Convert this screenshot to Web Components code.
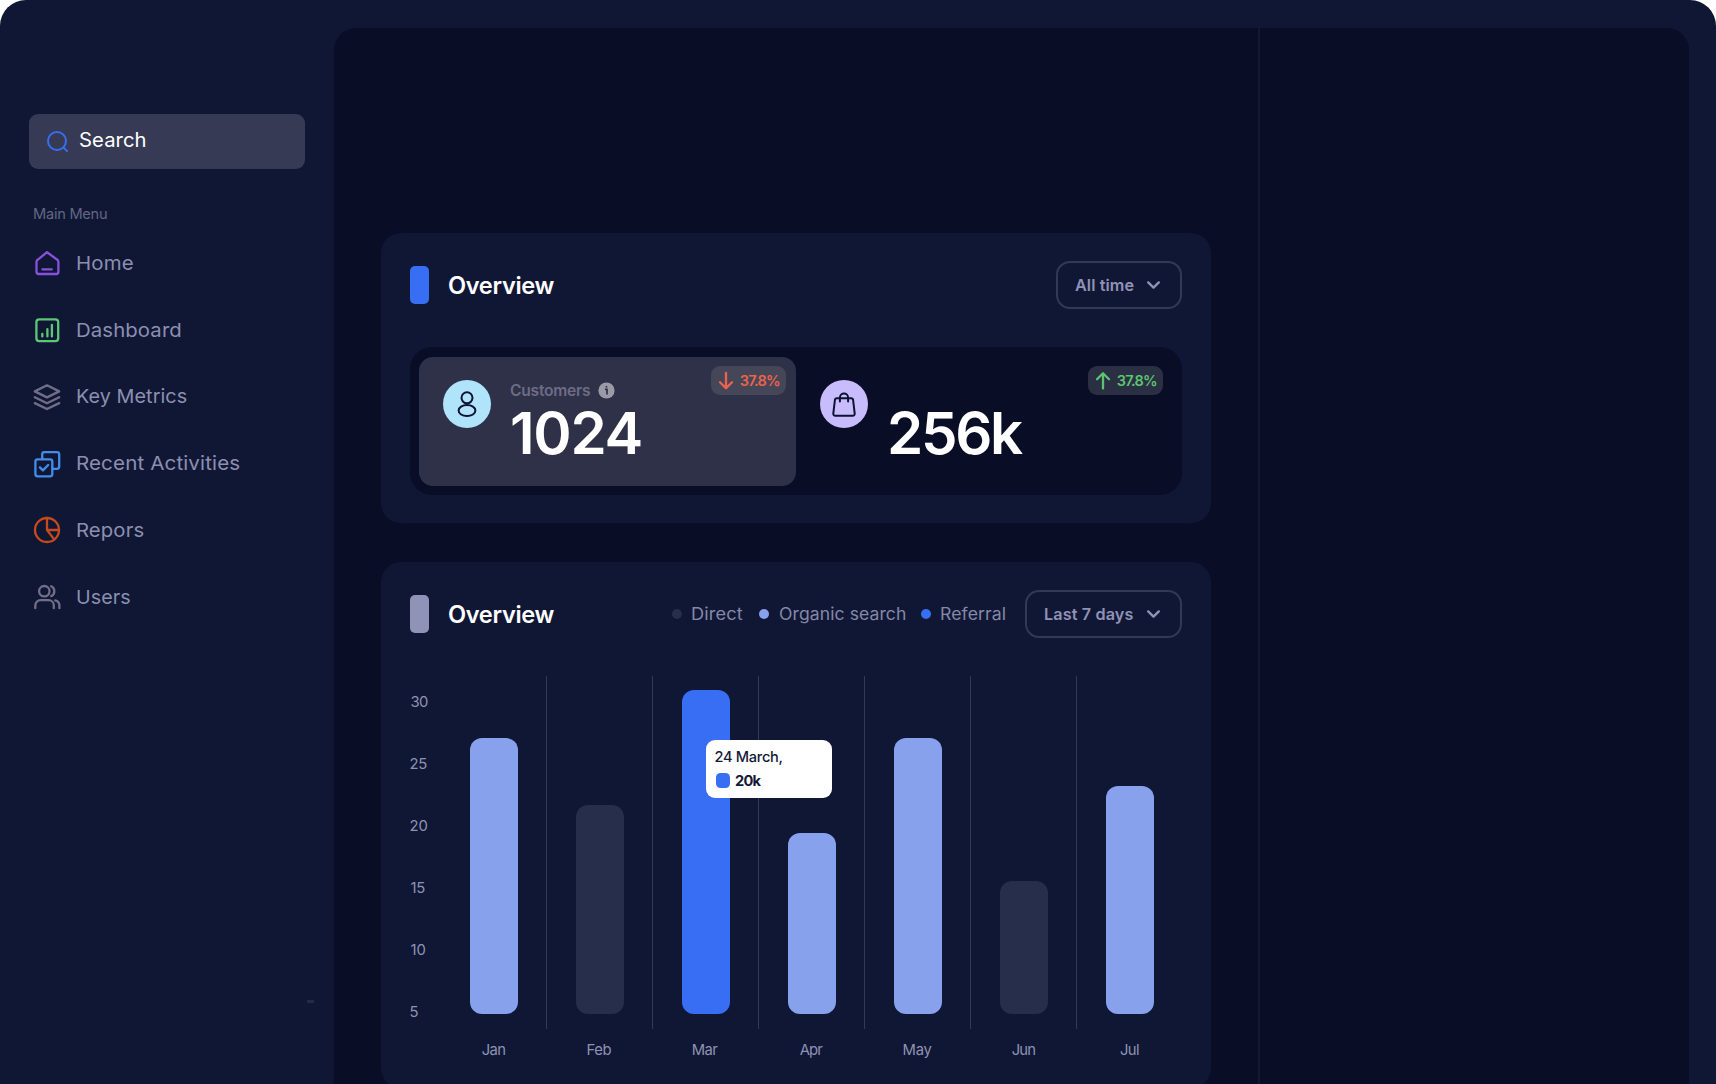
<!DOCTYPE html>
<html lang="en">
<head>
<meta charset="utf-8">
<title>Overview</title>
<style>
html,body{margin:0;height:100%;background:#fff;overflow:hidden}
body{font-family:Inter,"Liberation Sans",sans-serif}
</style>
</head>
<body>
<dash-app></dash-app>
<script>
const define = (name, html, setup) => customElements.define(name, class extends HTMLElement {
  connectedCallback() {
    if (this.shadowRoot) return;
    const root = this.attachShadow({ mode: 'open' });
    root.innerHTML = typeof html === 'function' ? html(this) : html;
    if (setup) setup(this, root);
  }
});

/* Text whose ink spans a set width: w = ink width in pixels, wide = draw the letters extended */
const ctx = document.createElement('canvas').getContext('2d');
define('fit-text', '<style>:host{display:block;white-space:pre;line-height:1.3;flex:none;transform-origin:0 50%}</style><slot></slot>', el => {
  const cs = getComputedStyle(el), t = el.textContent, w = parseFloat(el.getAttribute('w'));
  ctx.font = `${cs.fontWeight} ${cs.fontSize} ${cs.fontFamily}`;
  const m = ctx.measureText(t);
  const ink = m.actualBoundingBoxLeft + m.actualBoundingBoxRight;
  const scale = el.hasAttribute('wide') ? 1 + (w / ink - 1) * 0.85 : 1;
  el.style.width = w + 'px';
  if (scale !== 1) el.style.transform = `scaleX(${scale.toFixed(4)})`;
  el.style.letterSpacing = ((w / scale - ink) / Math.max(1, t.length - 1)).toFixed(3) + 'px';
  el.style.textIndent = m.actualBoundingBoxLeft.toFixed(2) + 'px';
});

const ICONS = {
  search: '<circle cx="11" cy="11" r="9"/><path d="M17.6 17.6L21 21"/>',
  home: '<path d="M14 3.2L24.3 10.8A2.6 2.6 0 0 1 25.4 13V22.8A2.2 2.2 0 0 1 23.2 25H5.7A2.2 2.2 0 0 1 3.5 22.8V13A2.6 2.6 0 0 1 4.6 10.8Z"/><path d="M9.4 20.3H18.8"/>',
  dashboard: '<rect x="3.4" y="3.3" width="21.8" height="21.8" rx="2.8"/><path d="M9.3 17.8V20.4M14.4 13.2V20.4M18.9 9V20.4"/>',
  layers: '<path d="M14 2.3L26.2 8.4L14 14.4L1.8 8.4ZM1.8 14.3L14 20.2L26.2 14.3M1.8 20.1L14 26L26.2 20.1"/>',
  recent: '<path d="M9.2 9V4.4A2.2 2.2 0 0 1 11.4 2.2H24A2.2 2.2 0 0 1 26.2 4.4V16.6A2.2 2.2 0 0 1 24 18.8H19.6"/><rect x="2.4" y="9.4" width="16.9" height="16.9" rx="2.2"/><path d="M6.9 17.4L9.9 20.4L15.2 15"/>',
  pie: '<circle cx="14" cy="14" r="12"/><path d="M14 2V14L21.2 23.4M14 14H26"/>',
  users: '<circle cx="11.3" cy="8.2" r="5.2"/><path d="M2.3 25.2V22.4A5.2 5.2 0 0 1 7.5 17.2H15.6A5.2 5.2 0 0 1 20.8 22.4V25.2M18.2 3.3A5.4 5.4 0 0 1 18.2 13.1M22.2 17.4A5.4 5.4 0 0 1 26.4 22.7V25.2"/>',
  chevron: '<path d="M1.2 1.4L6.5 6.6L11.8 1.4"/>',
  down: '<path d="M7 1V16M1 10.2L7 16.2L13 10.2"/>',
  up: '<path d="M7 16.6V1.4M1 7.2L7 1.2L13 7.2"/>',
  person: '<circle cx="14" cy="7.8" r="5.5"/><ellipse cx="14" cy="20.6" rx="8.4" ry="5.5"/>',
  bag: '<path d="M6.9 8.2H21.1A2 2 0 0 1 23.1 10L24.7 23.6A2 2 0 0 1 22.7 25.8H5.3A2 2 0 0 1 3.3 23.6L4.9 10A2 2 0 0 1 6.9 8.2ZM9.9 11.4V7.6A4.1 4.1 0 0 1 18.1 7.6V11.4"/>'
};
define('ui-icon', el => {
  const [w, h] = (el.getAttribute('box') || '28 28').split(' ');
  return `<style>:host{display:block;flex:none;width:${w}px;height:${h}px}svg{display:block;overflow:visible}</style>
  <svg width="${w}" height="${h}" viewBox="0 0 ${w} ${h}" fill="none" stroke="currentColor" stroke-width="${el.getAttribute('sw') || 2}" stroke-linecap="round" stroke-linejoin="round">${ICONS[el.getAttribute('name')]}</svg>`;
});

define('nav-item', el => `<style>
:host{display:flex;align-items:center;height:66.8px;padding-left:33.4px;gap:16.1px;font-size:19.2px;color:#8c8fb0}
ui-icon{color:${el.getAttribute('color')}}
</style><ui-icon name="${el.getAttribute('icon')}" sw="2.3"></ui-icon><slot></slot>`);

define('side-bar', `<style>
:host{display:flex;flex-direction:column;width:334px;flex:none;box-sizing:border-box;padding-top:113.5px}
.search{display:flex;align-items:center;gap:12px;height:55px;width:276.5px;box-sizing:border-box;margin-left:28.5px;padding-left:17px;border-radius:9px;background:#363a54;color:#fff;font-size:19.6px}
.search ui-icon{color:#376df3;margin-top:-1px}
.search fit-text{margin-top:-1px}
.label{margin:36.5px 0 0 34px;height:18px;display:flex;align-items:center;font-size:14.6px;color:#626682}
nav{margin-top:6.8px}
.mark{width:7px;height:3px;background:#242a48;margin:369px 0 0 307px}
</style>
<div class="search"><ui-icon name="search" box="22 22" sw="2"></ui-icon><fit-text wide w="66">Search</fit-text></div>
<div class="label"><fit-text w="73">Main Menu</fit-text></div>
<nav>
<nav-item icon="home" color="#8751dd"><fit-text wide w="56.5">Home</fit-text></nav-item>
<nav-item icon="dashboard" color="#5cc873"><fit-text wide w="104">Dashboard</fit-text></nav-item>
<nav-item icon="layers" color="#716e87"><fit-text wide w="110">Key Metrics</fit-text></nav-item>
<nav-item icon="recent" color="#438cea"><fit-text wide w="163">Recent Activities</fit-text></nav-item>
<nav-item icon="pie" color="#c54a1d"><fit-text wide w="67">Repors</fit-text></nav-item>
<nav-item icon="users" color="#716e87"><fit-text wide w="53.5">Users</fit-text></nav-item>
</nav>
<div class="mark"></div>`);

define('drop-button', `<style>
:host{display:flex;align-items:center;gap:13.5px;box-sizing:border-box;height:48px;padding:0 20px 0 var(--pad,17px);border:2px solid #333854;border-radius:14px;color:#9092b5;font-size:16.2px;font-weight:600}
::slotted(*){margin-top:1.5px}
</style><slot></slot><ui-icon name="chevron" box="13 8" sw="2.4"></ui-icon>`);

define('panel-card', el => `<style>
:host{display:block;box-sizing:border-box;width:830px;padding:28px 29px 0;border-radius:20px;background:#101735}
header{display:flex;align-items:center;height:48px}
i{width:19px;height:38px;border-radius:5px;background:${el.getAttribute('accent')}}
h2{margin:2px auto 0 20px;font-size:23.6px;font-weight:600;color:#fff}
</style><header><i></i><h2><fit-text w="105.5">Overview</fit-text></h2><slot name="tools"></slot></header><slot></slot>`);

define('stat-tile', el => `<style>
:host{display:flex;position:relative;box-sizing:border-box;width:377px;height:129px;margin-top:1px;padding:23px 0 0 24px;border-radius:14px;gap:19px}
:host([active]){background:#2e3147}
.disc{display:flex;align-items:center;justify-content:center;width:48px;height:48px;border-radius:50%;background:${el.getAttribute('disc')};color:#0c1230}
.label{display:flex;align-items:center;gap:8px;height:20px;margin-top:1px;font-size:15.6px;font-weight:600;color:#6d6c87}
.label ::slotted(info-dot){margin-top:-1px}
.value{font-size:58.2px;font-weight:600;color:#fff;height:64px;margin:0 0 0 2px;display:flex;align-items:center}
::slotted(fit-text){line-height:1}
.badge{position:absolute;right:10px;top:9px;width:75px;height:29px;box-sizing:border-box;padding:0 6px 0 8px;display:flex;align-items:center;justify-content:space-between;border-radius:9px;background:${el.getAttribute('badge')};color:${el.getAttribute('tone')};font-size:14.5px;font-weight:600}
.badge fit-text{margin-top:1px}
</style>
<div class="disc"><ui-icon name="${el.getAttribute('icon')}"></ui-icon></div>
<div><div class="label"><slot name="label"></slot></div><div class="value"><slot></slot></div></div>
<div class="badge"><ui-icon name="${el.getAttribute('trend')}" box="14 17" sw="2.3"></ui-icon><fit-text w="40.3">37.8%</fit-text></div>`);

define('info-dot', `<style>:host{display:block}svg{display:block}</style>
<svg width="17" height="17" viewBox="0 0 17 17"><circle cx="8.5" cy="8.5" r="8.1" fill="#9b9ba7"/><path d="M7 7.4H9V12.6M8.4 4V5.5" fill="none" stroke="#2e3147" stroke-width="1.7"/></svg>`);

define('legend-item', el => `<style>
:host{display:flex;align-items:center;gap:10px;font-size:16.6px;color:#8588a8}
i{width:10px;height:10px;border-radius:50%;background:${el.getAttribute('color')}}
::slotted(*){margin-top:1px}
</style><i></i><slot></slot>`);

define('chart-tip', `<style>
:host{display:block;position:absolute;z-index:2;left:52.5px;top:64px;width:126.5px;height:58px;box-sizing:border-box;padding:8px 10px;border-radius:9px;background:#fff;color:#141938;font-size:14.6px}
div{display:flex;align-items:center;height:18px;font-weight:500}
div+div{margin-top:5.5px;gap:5px;font-weight:700}
div+div fit-text{margin-top:1px}
i{width:14.5px;height:15px;border-radius:4.5px;background:#386ef3}
</style><div><fit-text w="67">24 March,</fit-text></div><div><i></i><fit-text w="26.5">20k</fit-text></div>`);

const L = '#87a1ed', D = '#262e4b', B = '#386ef3';
const BARS = [['Jan', 276.5, L, 23.5], ['Feb', 209.5, D, 24], ['Mar', 324.5, B, 25.5], ['Apr', 181.5, L, 23.5], ['May', 276.5, L, 28], ['Jun', 133.5, D, 23.5], ['Jul', 228.5, L, 19]];
define('bar-chart', `<style>
:host{display:flex;margin-top:38px;font-size:14.8px;color:#8f92b3}
.y{width:31px;flex:none;margin-top:-4px}
.y div{height:62px;display:flex;align-items:center;padding-left:.4px}
.col{width:106px;flex:none;position:relative}
.plot{height:352.5px;box-sizing:border-box;padding-bottom:14.5px;display:flex;align-items:flex-end;justify-content:center;border-right:1px solid #343955}
.col:last-child .plot{border-color:transparent}
.bar{width:48px;border-radius:12px}
.m{height:44px;display:flex;align-items:center;justify-content:center}
.m fit-text{margin-left:-1px}
</style>
<div class="y">${[['30',17.5],['25',16.8],['20',17],['15',14.8],['10',15],['5',7.8]].map(([v,w]) => `<div><fit-text w="${w}">${v}</fit-text></div>`).join('')}</div>
${BARS.map(([m,h,c,w]) => `<div class="col"><div class="plot"><div class="bar" style="height:${h}px;background:${c}"></div></div><div class="m"><fit-text w="${w}">${m}</fit-text></div>${m === 'Mar' ? '<chart-tip></chart-tip>' : ''}</div>`).join('')}`);

define('dash-app', `<style>
:host{display:flex;width:1716px;height:1084px;overflow:hidden;box-sizing:border-box;padding-right:27px;background:#101735;border-radius:26px 26px 0 0}
main{display:flex;flex:1;margin-top:28px;height:1056px;background:#090d26;border-radius:22px 22px 0 0}
.center{width:926px;box-sizing:border-box;padding:205px 0 0 47px;border-right:2px solid #16182f;overflow:hidden}
.one{height:290px}
.two{height:526px;margin-top:39px;--pad:18px}
.stats{display:flex;margin-top:38px;height:148px;box-sizing:border-box;padding:9px;border-radius:22px;background:#090d26}
.legend{display:flex;gap:15.5px;margin-right:20.5px}
</style>
<side-bar></side-bar>
<main><section class="center">
<panel-card class="one" accent="#386ef3">
<drop-button slot="tools"><fit-text w="58.5">All time</fit-text></drop-button>
<div class="stats">
<stat-tile active icon="person" disc="#b0e4fb" trend="down" badge="#454759" tone="#ec634b"><fit-text slot="label" w="80">Customers</fit-text><info-dot slot="label"></info-dot><fit-text w="128.5">1024</fit-text></stat-tile>
<stat-tile icon="bag" disc="#c8bcfd" trend="up" badge="#2b2f43" tone="#5cc46f"><fit-text w="133" style="margin-left:1px">256k</fit-text></stat-tile>
</div>
</panel-card>
<panel-card class="two" accent="#9093b8">
<div class="legend" slot="tools">
<legend-item color="#262e4b"><fit-text wide w="51.3">Direct</fit-text></legend-item>
<legend-item color="#87a1ed"><fit-text wide w="126.5">Organic search</fit-text></legend-item>
<legend-item color="#386ef3"><fit-text wide w="64">Referral</fit-text></legend-item>
</div>
<drop-button slot="tools"><fit-text w="88.5">Last 7 days</fit-text></drop-button>
<bar-chart></bar-chart>
</panel-card>
</section></main>`);
</script>
</body>
</html>
